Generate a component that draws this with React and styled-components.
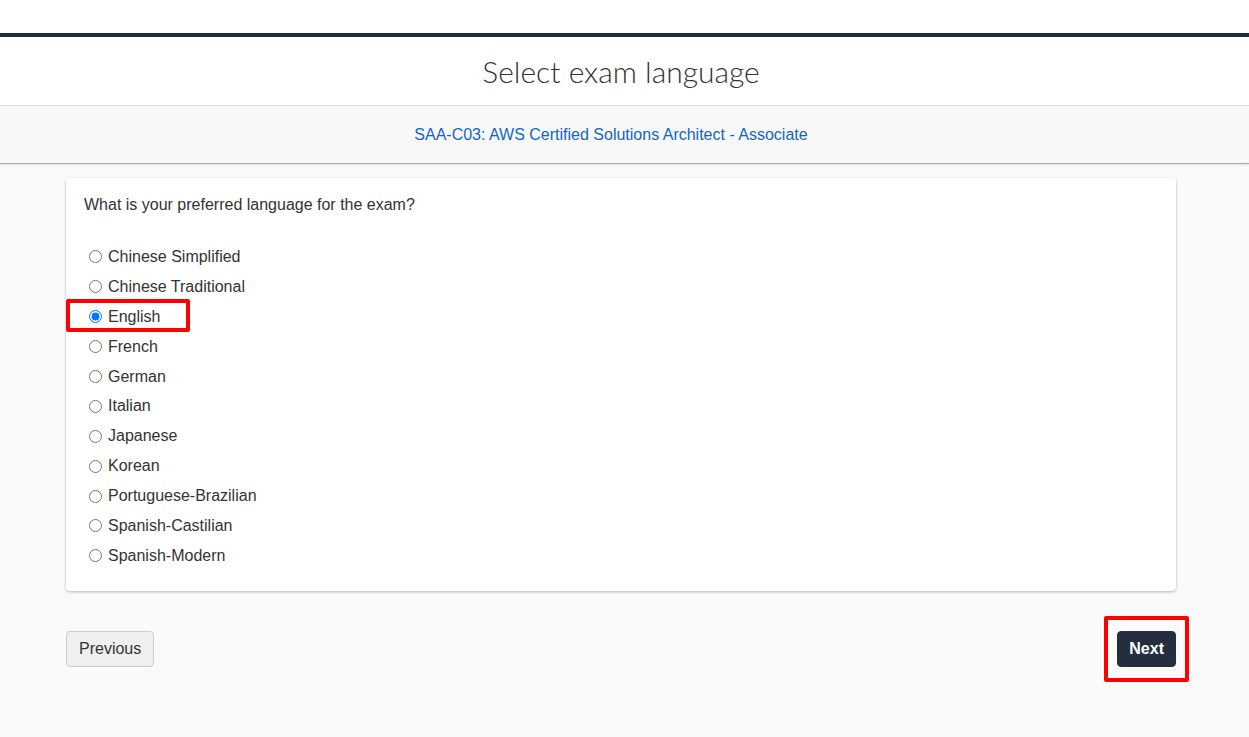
import React, { useState } from "react";
import styled, { createGlobalStyle } from "styled-components";

const GlobalStyle = createGlobalStyle`
  body {
    margin: 0;
    background-color: #fafafa;
    font-family: "Liberation Sans", Arial, sans-serif;
    color: #333;
  }
`;

const Page = styled.div`
  min-height: 737px;
  display: flex;
  flex-direction: column;
`;

const TopSpace = styled.div`
  height: 33px;
  background-color: #fff;
`;

const DarkBar = styled.div`
  height: 4px;
  background-color: #232f3e;
`;

const TitleBar = styled.header`
  height: 68px;
  background-color: #fff;
  border-bottom: 1px solid #ddd;
  display: flex;
  align-items: center;
  justify-content: center;
  padding-right: 7px;
  h1 {
    margin: 0;
    font-family: Lato, "Open Sans", sans-serif;
    font-weight: 300;
    font-size: 30px;
    color: #333;
  }
`;

const ExamBar = styled.div`
  height: 57px;
  background-color: #f8f8f8;
  border-bottom: 1px solid #aaa;
  box-shadow: 0 1px 2px rgba(0, 0, 0, 0.12);
  display: flex;
  align-items: center;
  justify-content: center;
  padding-right: 27px;
  a {
    color: #1166c4;
    font-size: 16px;
    text-decoration: none;
  }
`;

const Main = styled.main`
  padding: 14px 73px 0 66px;
`;

const Card = styled.section`
  background-color: #fff;
  border-radius: 4px;
  box-shadow: 0 1px 3px rgba(0, 0, 0, 0.28);
  padding: 18px 18px 20px;
`;

const Question = styled.p`
  margin: 0 0 28px;
  font-size: 16px;
  line-height: 18px;
`;

const Options = styled.div`
  display: flex;
  flex-direction: column;
`;

const Option = styled.label`
  position: relative;
  display: flex;
  align-items: center;
  height: 29.9px;
  font-size: 16px;
  color: #333;
  align-self: flex-start;
  input {
    margin: 0 6px 0 5px;
    width: 13px;
    height: 13px;
  }
  &::after {
    content: "";
    display: ${(p) => (p.$marked ? "block" : "none")};
    position: absolute;
    left: -18px;
    top: -3px;
    width: 124px;
    height: 33px;
    box-sizing: border-box;
    border: 4px solid #f00;
    border-radius: 2px;
  }
`;

const Actions = styled.div`
  display: flex;
  justify-content: space-between;
  align-items: center;
  margin-top: 40px;
`;

const Button = styled.button`
  position: relative;
  height: 36px;
  padding: 0 ${(p) => (p.$primary ? "11px" : "12px")};
  font-family: "Liberation Sans", Arial, sans-serif;
  font-size: 16px;
  border-radius: 4px;
  cursor: pointer;
  border: 1px solid ${(p) => (p.$primary ? "#232f3e" : "#ccc")};
  background-color: ${(p) => (p.$primary ? "#232f3e" : "#efefef")};
  color: ${(p) => (p.$primary ? "#fff" : "#333")};
  font-weight: ${(p) => (p.$primary ? 700 : 400)};
  &::after {
    content: "";
    display: ${(p) => (p.$marked ? "block" : "none")};
    position: absolute;
    left: -14px;
    right: -14px;
    top: -16px;
    bottom: -16px;
    border: 4px solid #f00;
    border-radius: 2px;
  }
`;

const languages = [
  "Chinese Simplified",
  "Chinese Traditional",
  "English",
  "French",
  "German",
  "Italian",
  "Japanese",
  "Korean",
  "Portuguese-Brazilian",
  "Spanish-Castilian",
  "Spanish-Modern",
];

const App = () => {
  const [language, setLanguage] = useState("English");

  return (
    <Page>
      <GlobalStyle />
      <TopSpace />
      <DarkBar />
      <TitleBar>
        <h1>Select exam language</h1>
      </TitleBar>
      <ExamBar>
        <a href="#exam">SAA-C03: AWS Certified Solutions Architect - Associate</a>
      </ExamBar>
      <Main>
        <Card>
          <Question>What is your preferred language for the exam?</Question>
          <Options>
            {languages.map((lang) => (
              <Option key={lang} $marked={lang === "English"}>
                <input
                  type="radio"
                  name="language"
                  checked={language === lang}
                  onChange={() => setLanguage(lang)}
                />
                {lang}
              </Option>
            ))}
          </Options>
        </Card>
        <Actions>
          <Button>Previous</Button>
          <Button $primary $marked>
            Next
          </Button>
        </Actions>
      </Main>
    </Page>
  );
};

export default App;
